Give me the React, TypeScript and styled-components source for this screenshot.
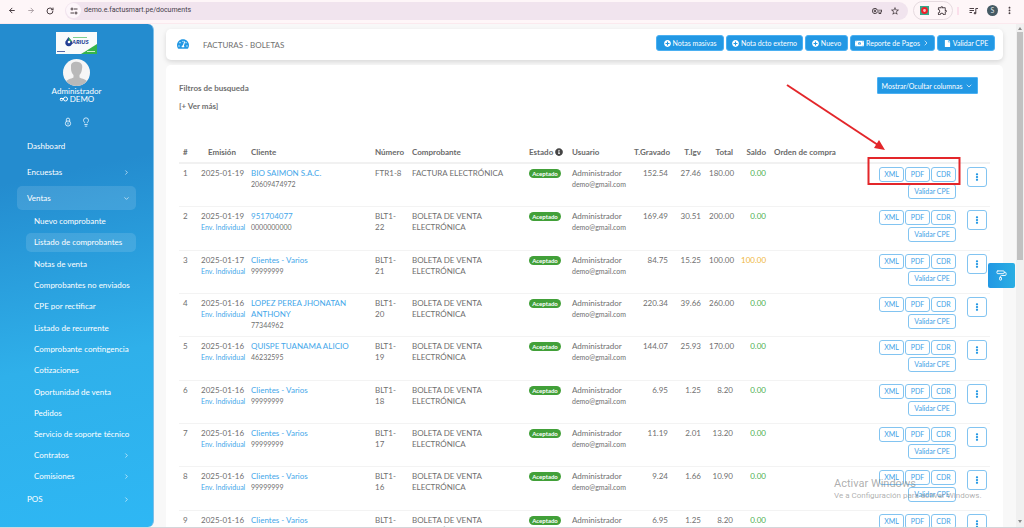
import React from "react";
import styled, { createGlobalStyle, css } from "styled-components";
import { FaPlusCircle, FaTachometerAlt, FaMoneyBillAlt, FaFile, FaInfoCircle, FaEllipsisV } from "react-icons/fa";
import { MdOutlineVpnKey, MdStarBorder, MdOutlineExtension, MdMoreVert } from "react-icons/md";
import { ArrowLeft, ArrowRight, RotateCw, ChevronRight, ChevronDown, PaintRoller, Lightbulb } from "lucide-react";

const blue = "#2298e4";
const font = `Lato, "Open Sans", sans-serif`;

const GlobalStyle = createGlobalStyle`
  * { box-sizing: border-box; }
  body { margin: 0; background: #f8f8f8; font-family: ${font}; font-size: 8px; line-height: 11px; color: #6f6f6f; }
  button { font-family: inherit; margin: 0; padding: 0; cursor: pointer; }
  a { text-decoration: none; }
  ul { list-style: none; margin: 0; padding: 0; }
`;

const Screen = styled.div`
  position: relative;
  height: 100vh;
  display: flex;
  flex-direction: column;
  overflow: hidden;
  border-bottom: 1px solid #d4d6da;
`;

/* Browser bar */
const BrowserBar = styled.header`
  display: flex;
  align-items: center;
  flex: none;
  height: 24px;
  padding: 0 6px 2px 8px;
  background: #fef6f8;
  border-bottom: 1px solid #fbe9ee;
  color: #4b4045;
`;
const NavButton = styled.button<{ $muted?: boolean }>`
  display: flex;
  width: 8px;
  margin-right: 11px;
  border: 0;
  background: none;
  color: ${(p) => (p.$muted ? "#b0a5aa" : "#4b4045")};
`;
const AddressBar = styled.div`
  display: flex;
  align-items: center;
  flex: 1;
  height: 18px;
  margin-right: 5px;
  padding: 0 4px 0 1px;
  border-radius: 9px;
  background: #f1e4ee;
`;
const SiteInfo = styled.button`
  display: flex;
  align-items: center;
  justify-content: center;
  width: 15px;
  height: 15px;
  border: 0;
  border-radius: 50%;
  background: #fdf6fa;
  color: #4b4045;
`;
const Address = styled.input`
  flex: 1;
  min-width: 0;
  margin-left: 3px;
  padding: 0;
  border: 0;
  outline: 0;
  background: none;
  font: 7px/11px Roboto, sans-serif;
  color: #45404a;
`;
const BarButton = styled.button`
  display: flex;
  align-items: center;
  justify-content: center;
  width: 18px;
  border: 0;
  background: none;
  color: #4b4045;
`;
const ExtensionGroup = styled.div`
  display: flex;
  align-items: center;
  height: 19px;
  padding: 0 1px;
  border: 1px solid #e6dbe0;
  border-radius: 10px;
`;
const Divider = styled.span`
  width: 2px;
  height: 8px;
  margin: 0 5px 0 4px;
  background: #fbdfeb;
`;
const Profile = styled.span`
  display: flex;
  align-items: center;
  justify-content: center;
  width: 11px;
  height: 11px;
  margin: 0 2px 0 5px;
  border-radius: 50%;
  background: #455a64;
  color: #dfe5e8;
  font-size: 7px;
`;

/* Page shell */
const Shell = styled.div`
  display: flex;
  flex: 1;
  min-height: 0;
`;
const Sidebar = styled.aside`
  flex: none;
  width: 154px;
  padding: 8px 17px 0;
  border-right: 1px solid #7cbfe8;
  border-radius: 0 6px 6px 0;
  background: linear-gradient(168deg, #248ccf 0%, #248ccf 30%, #2fb0ea 66%, #2eb7f4 100%);
  color: #fff;
  white-space: nowrap;
`;
const Profiles = styled.div`
  display: flex;
  flex-direction: column;
  align-items: center;
  line-height: 8px;
`;
const Pictures = styled.div`
  display: flex;
  flex-direction: column;
  align-items: center;
  gap: 5px;
  margin-bottom: 1px;
`;
const Company = styled.div`
  display: flex;
  align-items: center;
  gap: 2px;
`;
const QuickLinks = styled.div`
  display: flex;
  justify-content: center;
  gap: 8px;
  margin: 14px 0 7px;
`;
const QuickLink = styled.a`
  display: flex;
  color: #e8f5ff;
`;
const Menu = styled.ul`
  display: flex;
  flex-direction: column;
  gap: 2px;
  margin-bottom: 1px;
`;
const itemShape = css<{ $active?: boolean }>`
  display: flex;
  align-items: center;
  justify-content: space-between;
  color: #fff;
  border-radius: 5px;
  background: ${(p) => (p.$active ? "rgba(255,255,255,0.12)" : "none")};
`;
const MenuLink = styled.a`
  ${itemShape}
  height: 24px;
  padding: 0 6px 0 10px;
`;
const SubMenu = styled.ul`
  display: grid;
  grid-auto-rows: 1fr;
  height: 213px;
  padding-left: 9px;
`;
const SubItem = styled.li`
  display: flex;
  align-items: center;
`;
const SubLink = styled.a`
  ${itemShape}
  flex: 1;
  height: 19px;
  padding: 0 6px 0 8px;
`;
const Tail = styled.ul`
  padding-left: 9px;
`;
const TailItem = styled.li`
  display: flex;
  align-items: center;
  height: 21px;
`;
const Content = styled.main`
  flex: 1;
  min-width: 0;
  display: flex;
  flex-direction: column;
  gap: 5px;
  padding: 5px 13px 0 12px;
  overflow: hidden;
`;
const TitleCard = styled.section`
  display: flex;
  align-items: flex-start;
  flex: none;
  height: 31px;
  padding: 6px 8px 0 11px;
  border-radius: 5px;
  background: #fff;
  box-shadow: 0 2px 5px rgba(0, 0, 0, 0.13);
`;
const TitleIcon = styled.span`
  display: flex;
  width: 26px;
  padding-top: 3px;
  color: ${blue};
`;
const Title = styled.h1`
  flex: 1;
  margin: 0;
  padding-top: 5px;
  font-size: 8px;
  line-height: 11px;
  font-weight: 400;
`;
const Toolbar = styled.div`
  display: flex;
  gap: 2px;
`;
const Action = styled.button<{ $width: number }>`
  display: flex;
  align-items: center;
  justify-content: center;
  gap: 2px;
  width: ${(p) => p.$width}px;
  height: 16px;
  border: 1px solid #4bb0f2;
  border-radius: 3px;
  background: ${blue};
  color: #fff;
  font-size: 7px;
  white-space: nowrap;
`;
const ListCard = styled.section`
  position: relative;
  flex: none;
  padding: 12px 13px 20px;
  border-radius: 5px;
  background: #fff;
`;
const Filters = styled.div`
  display: flex;
  justify-content: space-between;
  align-items: flex-start;
  height: 63px;
  padding-right: 12px;
`;
const FilterText = styled.div`
  display: flex;
  flex-direction: column;
  align-items: flex-start;
  gap: 7px;
  padding-top: 6px;
`;
const FilterTitle = styled.h2`
  margin: 0;
  font-size: 8px;
  line-height: 11px;
  font-weight: 700;
`;
const MoreButton = styled.button`
  border: 0;
  background: none;
  color: inherit;
  font-size: 8px;
  line-height: 11px;
  font-weight: 700;
`;
const ColumnsButton = styled.button`
  display: flex;
  align-items: center;
  justify-content: center;
  gap: 3px;
  width: 101px;
  height: 17px;
  border: 1px solid #4bb0f2;
  border-radius: 1px;
  background: ${blue};
  color: #fff;
  font-size: 7px;
`;

/* Table */
const Table = styled.table`
  width: 100%;
  height: 414px;
  table-layout: fixed;
  border-collapse: separate;
  border-spacing: 0;
`;
const Col = styled.col<{ $w?: number }>`
  width: ${(p) => (p.$w ? `${p.$w}px` : "auto")};
`;
type Align = "left" | "right" | "center";
const Th = styled.th<{ $align?: Align }>`
  height: 24px;
  padding: 3px 4px 0;
  border-bottom: 2px solid #f1f1f1;
  text-align: ${(p) => p.$align ?? "left"};
  color: #6a6a6a;
  white-space: nowrap;
`;
const Td = styled.td<{ $align?: Align; $nowrap?: boolean }>`
  height: 43px;
  padding: 4px 4px 0;
  border-bottom: 1px solid #f3f3f3;
  vertical-align: top;
  text-align: ${(p) => p.$align ?? "left"};
  white-space: ${(p) => (p.$nowrap ? "nowrap" : "normal")};
`;
const ButtonTd = styled(Td)`
  padding-top: 3px;
`;
const Small = styled.div`
  font-size: 7px;
`;
const BlueLink = styled.a`
  display: block;
  color: #45a7ea;
`;
const SmallLink = styled(BlueLink)`
  font-size: 7px;
`;
const Balance = styled.span<{ $due: boolean }>`
  color: ${(p) => (p.$due ? "#efb73e" : "#4caf50")};
`;
const Badge = styled.span`
  display: block;
  width: 32px;
  height: 9px;
  margin-top: 1px;
  border-radius: 5px;
  background: #42a039;
  color: #fff;
  font-size: 6px;
  line-height: 9px;
  font-weight: 700;
  text-align: center;
`;
const HeadIcon = styled.span`
  display: inline-block;
  margin-left: 2px;
  vertical-align: -1px;
  line-height: 8px;
  color: #444;
`;
const RowButtons = styled.div`
  display: flex;
  flex-wrap: wrap;
  justify-content: flex-end;
  gap: 2px 1px;
`;
const RowButton = styled.button<{ $wide?: boolean }>`
  width: ${(p) => (p.$wide ? 48 : 25)}px;
  height: 15px;
  border: 1px solid #82c4f1;
  border-radius: 3px;
  background: #fff;
  color: #3fa2e6;
  font-size: 7px;
  line-height: 11px;
`;
const MenuButton = styled.button`
  display: flex;
  align-items: center;
  justify-content: center;
  width: 20px;
  height: 20px;
  margin-left: 3px;
  border: 1px solid #82c4f1;
  border-radius: 3px;
  background: #fff;
  color: ${blue};
`;

/* Scrollbar and overlays */
const ScrollTrack = styled.div`
  display: flex;
  flex-direction: column;
  align-items: center;
  flex: none;
  width: 8px;
  padding: 3px 0 4px;
  background: #f0f0f0;
`;
const ScrollThumb = styled.div`
  width: 6px;
  height: 46%;
  margin: 2px 0 auto;
  background: #c1c1c1;
`;
const ScrollArrow = styled.svg`
  flex: none;
  width: 4px;
  height: 3px;
  fill: #8a8a8a;
`;
const ThemeButton = styled.button`
  position: absolute;
  top: 263px;
  right: 9px;
  display: flex;
  align-items: center;
  justify-content: center;
  width: 27px;
  height: 25px;
  border: 0;
  border-radius: 2px;
  background: linear-gradient(90deg, ${blue}, #2aaee3);
  color: #fff;
`;
const Annotation = styled.svg`
  position: absolute;
  top: 17px;
  right: 41px;
  width: 178px;
  height: 104px;
  pointer-events: none;
`;
const Watermark = styled.div`
  position: absolute;
  right: 42px;
  bottom: 25px;
  width: 148px;
  font-family: Roboto, sans-serif;
  font-size: 8px;
  line-height: 12px;
  color: rgba(120, 120, 120, 0.6);
  white-space: nowrap;
  pointer-events: none;
`;
const WatermarkTitle = styled.div`
  font-size: 11px;
`;

const CompanyLogo = () => (
  <svg width="41" height="22" viewBox="0 0 41 22" aria-label="Logo">
    <rect width="41" height="22" fill="#f9fbfb" />
    <path d="M41 12V22H25Z" fill="#35b44b" />
    <path d="M12.500 5 16 9.500A3.500 3.500 0 1 1 9.500 9.500Z" fill="#233f94" />
    <path d="M12.500 5 16 9.500 13 9Z" fill="#35b44b" />
    <circle cx="13" cy="10" r="1.300" fill="#fff" />
    <rect x="17" y="5" width="14" height="1" fill="#7fcf8d" />
    <text x="16" y="12" fontSize="6" fontWeight="900" fontStyle="italic" fontFamily="Lato, sans-serif" fill="#233f94">ARIUS</text>
    <rect x="1" y="19" width="8" height="1" fill="#5568a8" />
    <rect x="31" y="19" width="8" height="1" fill="#c9efd0" />
  </svg>
);
const Avatar = () => (
  <svg width="27" height="27" viewBox="0 0 27 27">
    <defs>
      <clipPath id="avatar"><circle cx="13.500" cy="13.500" r="13.500" /></clipPath>
    </defs>
    <g clipPath="url(#avatar)">
      <rect width="27" height="27" fill="#f6f6f6" />
      <path d="M8 7C8 3 12 2.500 15 3C18.500 3.500 20 6 19 10C18.800 13 17.500 15 16.500 16V18.500C19 20 23.500 20 25 24V27H2V24C3.500 20 8 20 10.500 18.500V16C9 14.500 8 12 8 10Z" fill="#b9b9b9" />
    </g>
  </svg>
);
const TokenIcon = () => (
  <svg width="9" height="6" viewBox="0 0 9 6" fill="none" stroke="#fff" strokeWidth="1">
    <circle cx="6.500" cy="3" r="2" />
    <circle cx="2.500" cy="3.500" r="1.200" />
    <path d="M1 2.500H5" />
  </svg>
);
const LockIcon = () => (
  <svg width="10" height="10" viewBox="0 0 10 10" fill="none" stroke="currentColor" strokeWidth="0.900">
    <path d="M3.300 4.500V2.800a1.700 1.700 0 0 1 3.400 0V4.500" />
    <circle cx="5" cy="6.500" r="2.600" />
    <path d="M5 5.500V7.500" />
  </svg>
);
const TuneIcon = () => (
  <svg width="8" height="8" viewBox="0 0 8 8" fill="none" stroke="currentColor" strokeWidth="1">
    <circle cx="2" cy="2" r="1" />
    <path d="M4 2H7.500M0.500 6H4" />
    <circle cx="6" cy="6" r="1" />
  </svg>
);
const PlaylistIcon = () => (
  <svg width="9" height="8" viewBox="0 0 9 8" fill="none" stroke="currentColor" strokeWidth="1">
    <path d="M0.500 1.500H5M0.500 3.500H5M0.500 5.500H3M6.800 6V1.500H9" />
    <circle cx="6" cy="6.200" r="0.800" fill="currentColor" />
  </svg>
);
const RecorderIcon = () => (
  <svg width="9" height="9" viewBox="0 0 9 9">
    <rect width="9" height="9" fill="#35a98c" />
    <circle cx="4.500" cy="4.500" r="2.400" fill="#f6c9c4" stroke="#f0202a" strokeWidth="2" />
  </svg>
);

const subItems = [
  "Nuevo comprobante", "Listado de comprobantes", "Notas de venta", "Comprobantes no enviados", "CPE por rectificar",
  "Listado de recurrente", "Comprobante contingencia", "Cotizaciones", "Oportunidad de venta", "Pedidos",
];

type Doc = { date: string; client: string; id: string; num: string; type: string; taxed: string; igv: string; total: string; balance: string; single: boolean };
const doc = (date: string, client: string, id: string, num: string, taxed: string, igv: string, total: string, balance = "0.00"): Doc => ({
  date, client, id, num, taxed, igv, total, balance,
  type: num.startsWith("FTR") ? "FACTURA ELECTRÓNICA" : "BOLETA DE VENTA ELECTRÓNICA",
  single: !num.startsWith("FTR"),
});
const docs: Doc[] = [
  doc("2025-01-19", "BIO SAIMON S.A.C.", "20609474972", "FTR1-8", "152.54", "27.46", "180.00"),
  doc("2025-01-19", "951704077", "0000000000", "BLT1-22", "169.49", "30.51", "200.00"),
  doc("2025-01-17", "Clientes - Varios", "99999999", "BLT1-21", "84.75", "15.25", "100.00", "100.00"),
  doc("2025-01-16", "LOPEZ PEREA JHONATAN ANTHONY", "77344962", "BLT1-20", "220.34", "39.66", "260.00"),
  doc("2025-01-16", "QUISPE TUANAMA ALICIO", "46232595", "BLT1-19", "144.07", "25.93", "170.00"),
  doc("2025-01-16", "Clientes - Varios", "99999999", "BLT1-18", "6.95", "1.25", "8.20"),
  doc("2025-01-16", "Clientes - Varios", "99999999", "BLT1-17", "11.19", "2.01", "13.20"),
  doc("2025-01-16", "Clientes - Varios", "99999999", "BLT1-16", "9.24", "1.66", "10.90"),
  doc("2025-01-16", "Clientes - Varios", "99999999", "BLT1-15", "6.95", "1.25", "8.20"),
];
const widths = [18, 50, 124, 37, 117, 43, 62, 42, 33, 32, 33, 0, 90, 30];

export default function App() {
  return (
    <Screen>
      <GlobalStyle />
      <BrowserBar>
        <NavButton aria-label="Atrás"><ArrowLeft size={9} strokeWidth={3} /></NavButton>
        <NavButton aria-label="Adelante" $muted><ArrowRight size={9} strokeWidth={3} /></NavButton>
        <NavButton aria-label="Recargar"><RotateCw size={8} strokeWidth={3} /></NavButton>
        <AddressBar>
          <SiteInfo aria-label="Información del sitio"><TuneIcon /></SiteInfo>
          <Address aria-label="Dirección" defaultValue="demo.e.factusmart.pe/documents" />
          <BarButton aria-label="Contraseñas"><MdOutlineVpnKey size={10} /></BarButton>
          <BarButton aria-label="Favorito"><MdStarBorder size={10} /></BarButton>
        </AddressBar>
        <ExtensionGroup>
          <BarButton aria-label="Grabador"><RecorderIcon /></BarButton>
          <BarButton aria-label="Extensiones"><MdOutlineExtension size={11} /></BarButton>
        </ExtensionGroup>
        <Divider />
        <BarButton aria-label="Multimedia"><PlaylistIcon /></BarButton>
        <Profile>S</Profile>
        <BarButton aria-label="Menú"><MdMoreVert size={11} /></BarButton>
      </BrowserBar>

      <Shell>
        <Sidebar>
          <Profiles>
            <Pictures>
              <CompanyLogo />
              <Avatar />
            </Pictures>
            <div>Administrador</div>
            <Company><TokenIcon />DEMO</Company>
          </Profiles>
          <QuickLinks>
            <QuickLink href="#lock" aria-label="Bloquear"><LockIcon /></QuickLink>
            <QuickLink href="#help" aria-label="Ayuda"><Lightbulb size={10} /></QuickLink>
          </QuickLinks>
          <nav>
            <Menu>
              <li><MenuLink href="#dashboard">Dashboard</MenuLink></li>
              <li><MenuLink href="#encuestas">Encuestas<ChevronRight size={7} /></MenuLink></li>
              <li><MenuLink href="#ventas" $active>Ventas<ChevronDown size={7} /></MenuLink></li>
            </Menu>
            <SubMenu>
              {subItems.map((s, i) => (
                <SubItem key={s}><SubLink href="#item" $active={i === 1}>{s}</SubLink></SubItem>
              ))}
            </SubMenu>
            <Tail>
              <TailItem><SubLink href="#soporte">Servicio de soporte técnico</SubLink></TailItem>
              <TailItem><SubLink href="#contratos">Contratos<ChevronRight size={7} /></SubLink></TailItem>
              <TailItem><SubLink href="#comisiones">Comisiones<ChevronRight size={7} /></SubLink></TailItem>
            </Tail>
            <MenuLink href="#pos">POS<ChevronRight size={7} /></MenuLink>
          </nav>
        </Sidebar>

        <Content>
          <TitleCard>
            <TitleIcon><FaTachometerAlt size={12} /></TitleIcon>
            <Title>FACTURAS - BOLETAS</Title>
            <Toolbar>
              <Action $width={68}><FaPlusCircle size={7} />Notas masivas</Action>
              <Action $width={77}><FaPlusCircle size={7} />Nota dcto externo</Action>
              <Action $width={43}><FaPlusCircle size={7} />Nuevo</Action>
              <Action $width={85}><FaMoneyBillAlt size={9} />Reporte de Pagos<ChevronRight size={8} /></Action>
              <Action $width={58}><FaFile size={7} />Validar CPE</Action>
            </Toolbar>
          </TitleCard>

          <ListCard>
            <Filters>
              <FilterText>
                <FilterTitle>Filtros de busqueda</FilterTitle>
                <MoreButton>[+ Ver más]</MoreButton>
              </FilterText>
              <ColumnsButton>Mostrar/Ocultar columnas<ChevronDown size={8} /></ColumnsButton>
            </Filters>
            <Table>
              <colgroup>{widths.map((w, i) => <Col key={i} $w={w} />)}</colgroup>
              <thead>
                <tr>
                  <Th>#</Th>
                  <Th $align="center">Emisión</Th>
                  <Th>Cliente</Th>
                  <Th>Número</Th>
                  <Th>Comprobante</Th>
                  <Th>Estado<HeadIcon><FaInfoCircle size={8} /></HeadIcon></Th>
                  <Th>Usuario</Th>
                  <Th $align="right">T.Gravado</Th>
                  <Th $align="right">T.Igv</Th>
                  <Th $align="right">Total</Th>
                  <Th $align="right">Saldo</Th>
                  <Th>Orden de compra</Th>
                  <Th />
                  <Th />
                </tr>
              </thead>
              <tbody>
                {docs.map((d, i) => (
                  <tr key={d.num}>
                    <Td>{i + 1}</Td>
                    <Td $nowrap>{d.date}{d.single && <SmallLink href="#envio">Env. Individual</SmallLink>}</Td>
                    <Td><BlueLink href="#cliente">{d.client}</BlueLink><Small>{d.id}</Small></Td>
                    <Td>{d.num}</Td>
                    <Td>{d.type}</Td>
                    <Td><Badge>Aceptado</Badge></Td>
                    <Td>Administrador<Small>demo@gmail.com</Small></Td>
                    <Td $align="right">{d.taxed}</Td>
                    <Td $align="right">{d.igv}</Td>
                    <Td $align="right">{d.total}</Td>
                    <Td $align="right"><Balance $due={d.balance !== "0.00"}>{d.balance}</Balance></Td>
                    <Td />
                    <ButtonTd>
                      <RowButtons>
                        <RowButton>XML</RowButton>
                        <RowButton>PDF</RowButton>
                        <RowButton>CDR</RowButton>
                        <RowButton $wide>Validar CPE</RowButton>
                      </RowButtons>
                    </ButtonTd>
                    <ButtonTd><MenuButton aria-label="Opciones"><FaEllipsisV size={8} /></MenuButton></ButtonTd>
                  </tr>
                ))}
              </tbody>
            </Table>
            <Annotation viewBox="0 0 178 104">
              <path d="M3 3 94 63" stroke="#e3262a" strokeWidth="2" />
              <path d="M101 68 90 66 95 58Z" fill="#e3262a" />
              <rect x="84.500" y="76" width="91" height="26" fill="none" stroke="#e3262a" strokeWidth="2" />
            </Annotation>
          </ListCard>
        </Content>

        <ScrollTrack>
          <ScrollArrow viewBox="0 0 4 3"><path d="M0 3 2 0 4 3Z" /></ScrollArrow>
          <ScrollThumb />
          <ScrollArrow viewBox="0 0 4 3"><path d="M0 0 2 3 4 0Z" /></ScrollArrow>
        </ScrollTrack>
      </Shell>

      <ThemeButton aria-label="Tema"><PaintRoller size={11} /></ThemeButton>
      <Watermark>
        <WatermarkTitle>Activar Windows</WatermarkTitle>
        Ve a Configuración para activar Windows.
      </Watermark>
    </Screen>
  );
}
